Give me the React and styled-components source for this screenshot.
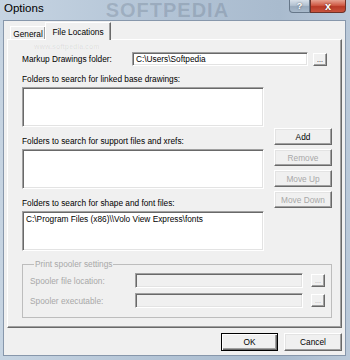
import styled, { createGlobalStyle } from "styled-components";

const GlobalStyle = createGlobalStyle`
  body {
    margin: 0;
    background: #fff;
    font-family: "Liberation Sans", Arial, sans-serif;
  }
`;

const Window = styled.div`
  position: relative;
  width: 350px;
  height: 360px;
  box-sizing: border-box;
  display: flex;
  flex-direction: column;
  padding: 0 4px 4px 3px;
  background: linear-gradient(to right, #c6d4e2, #b3c4d6 45%, #a9bbce 80%, #bac9d9);
  font-size: 8.3px;
  color: #000;
`;

const TitleBar = styled.div`
  height: 20px;
  display: flex;
  align-items: flex-start;
`;

const Caption = styled.div`
  font-size: 11.5px;
  line-height: 16px;
  padding-left: 1px;
  color: #000;
`;

const Watermark = styled.div`
  margin-left: 62px;
  font-size: 20px;
  line-height: 20px;
  font-weight: bold;
  letter-spacing: 1px;
  color: rgba(70, 85, 105, 0.22);
`;

const CaptionButtons = styled.div`
  margin-left: auto;
  display: flex;
`;

const CaptionButton = styled.div`
  height: 13px;
  box-sizing: border-box;
  display: flex;
  align-items: center;
  justify-content: center;
  color: #fff;
  font-weight: bold;
  font-size: ${(p) => (p.$close ? "11px" : "9px")};
  width: ${(p) => (p.$close ? "36px" : "21px")};
  border: 1px solid ${(p) => (p.$close ? "#6e3228" : "#667789")};
  border-top: none;
  border-radius: ${(p) => (p.$close ? "0 0 4px 0" : "0 0 0 4px")};
  background: ${(p) =>
    p.$close
      ? "linear-gradient(#e6a291, #cf5a45 45%, #b83a26 55%, #c9533d)"
      : "linear-gradient(#d8e1ea, #b3c2d1 45%, #98aabd 55%, #a9bacb)"};
  text-shadow: 0 0 2px rgba(0, 0, 0, 0.6);
`;

const Client = styled.div`
  position: relative;
  flex: 1;
  display: flex;
  flex-direction: column;
  background: #f0f0f0;
  border: 1px solid #8797ab;
  padding: 1px 3px 4px 3px;
  overflow: hidden;
`;

const FaintMark = styled.div`
  position: absolute;
  left: ${(p) => p.$x}px;
  top: ${(p) => p.$y}px;
  font-size: ${(p) => p.$size}px;
  font-weight: bold;
  color: rgba(0, 0, 0, 0.07);
  pointer-events: none;
  white-space: nowrap;
`;

const Tabs = styled.div`
  height: 17px;
  display: flex;
  align-items: flex-end;
  padding-left: 3px;
`;

const Tab = styled.div`
  position: relative;
  z-index: ${(p) => (p.$active ? 2 : 1)};
  box-sizing: border-box;
  width: ${(p) => p.$w}px;
  height: ${(p) => (p.$active ? "18px" : "13px")};
  margin-bottom: ${(p) => (p.$active ? "-1px" : "0")};
  margin-left: ${(p) => (p.$active ? "-1px" : "0")};
  display: flex;
  align-items: center;
  justify-content: center;
  background: #f0f0f0;
  border-top: 1px solid #fff;
  border-left: 1px solid #fff;
  border-right: 1px solid #696969;
  box-shadow: inset -1px 0 #a0a0a0;
  padding-top: ${(p) => (p.$active ? "0" : "1px")};
`;

const Panel = styled.div`
  height: 289px;
  box-sizing: border-box;
  display: flex;
  flex-direction: column;
  padding: 12px 9px 0 14px;
  border-top: 1px solid #fff;
  border-left: 1px solid #fff;
  border-right: 1px solid #696969;
  border-bottom: 1px solid #696969;
  box-shadow: inset -1px -1px #a0a0a0;
`;

const FieldRow = styled.div`
  display: flex;
  align-items: center;
  height: ${(p) => p.$h || 14}px;
`;

const FieldLabel = styled.span`
  width: ${(p) => p.$w}px;
  flex-shrink: 0;
  color: ${(p) => (p.$disabled ? "#a8a8a8" : "#000")};
`;

const TextBox = styled.div`
  box-sizing: border-box;
  width: ${(p) => p.$w}px;
  height: ${(p) => p.$h}px;
  background: ${(p) => (p.$disabled ? "#f0f0f0" : "#fff")};
  border-top: 1px solid #a0a0a0;
  border-left: 1px solid #a0a0a0;
  border-right: 1px solid #fff;
  border-bottom: 1px solid #fff;
  box-shadow: inset 1px 1px #696969, inset -1px -1px #e3e3e3;
  padding: 0 3px;
  display: flex;
  align-items: center;
  white-space: nowrap;
`;

const Browse = styled.div`
  box-sizing: border-box;
  width: 14px;
  height: 13px;
  margin-left: ${(p) => p.$gap}px;
  display: flex;
  align-items: flex-end;
  justify-content: center;
  padding-bottom: 2px;
  font-size: 7px;
  line-height: 7px;
  background: #f0f0f0;
  color: ${(p) => (p.$disabled ? "#a8a8a8" : "#000")};
  border-top: 1px solid #fff;
  border-left: 1px solid #fff;
  border-right: 1px solid #696969;
  border-bottom: 1px solid #696969;
  box-shadow: inset -1px -1px #a0a0a0;
`;

const Main = styled.div`
  margin-top: 8px;
  display: grid;
  grid-template-columns: 242px 58px;
  column-gap: 10px;
`;

const Lists = styled.div`
  display: flex;
  flex-direction: column;
  gap: 9px;
`;

const Section = styled.div`
  display: flex;
  flex-direction: column;
  gap: 3px;
`;

const SectionLabel = styled.div`
  line-height: 10px;
  white-space: nowrap;
`;

const ListBox = styled.div`
  box-sizing: border-box;
  height: 40px;
  background: #fff;
  border-top: 1px solid #a0a0a0;
  border-left: 1px solid #a0a0a0;
  border-right: 1px solid #fff;
  border-bottom: 1px solid #fff;
  box-shadow: inset 1px 1px #696969, inset -1px -1px #e3e3e3;
  padding: 2px 3px;
  line-height: 10px;
  white-space: nowrap;
`;

const SideButtons = styled.div`
  padding-top: 54px;
  display: flex;
  flex-direction: column;
  gap: 4px;
`;

const Button = styled.div`
  box-sizing: border-box;
  width: ${(p) => p.$w || 58}px;
  height: ${(p) => p.$h || 17}px;
  display: flex;
  align-items: center;
  justify-content: center;
  background: #f0f0f0;
  color: ${(p) => (p.$disabled ? "#a8a8a8" : "#000")};
  border-top: 1px solid ${(p) => (p.$default ? "#000" : "#fff")};
  border-left: 1px solid ${(p) => (p.$default ? "#000" : "#fff")};
  border-right: 1px solid ${(p) => (p.$default ? "#000" : "#696969")};
  border-bottom: 1px solid ${(p) => (p.$default ? "#000" : "#696969")};
  box-shadow: ${(p) =>
    p.$default
      ? "inset 1px 1px #fff, inset -1px -1px #696969, inset -2px -2px #a0a0a0"
      : "inset -1px -1px #a0a0a0, inset 1px 1px #e3e3e3"};
`;

const Group = styled.fieldset`
  margin: 8px 0 0 0;
  padding: 4px 6px 9px 7px;
  width: 310px;
  box-sizing: border-box;
  min-width: 0;
  border: 1px solid #bdbdbd;
  display: flex;
  flex-direction: column;
  gap: 5px;
`;

const GroupTitle = styled.legend`
  margin-left: 4px;
  padding: 0 1px;
  line-height: 10px;
  color: #a8a8a8;
`;

const Footer = styled.div`
  margin-top: 5px;
  display: flex;
  justify-content: flex-end;
  gap: 6px;
`;

const App = () => {
  return (
    <>
      <GlobalStyle />
      <Window>
        <TitleBar>
          <Caption>Options</Caption>
          <Watermark>SOFTPEDIA</Watermark>
          <CaptionButtons>
            <CaptionButton>?</CaptionButton>
            <CaptionButton $close>x</CaptionButton>
          </CaptionButtons>
        </TitleBar>
        <Client>
          <FaintMark $x={30} $y={22} $size={7}>www.softpedia.com</FaintMark>
          <Tabs>
            <Tab $w={36}>General</Tab>
            <Tab $w={66} $active>File Locations</Tab>
          </Tabs>
          <Panel>
            <FieldRow>
              <FieldLabel $w={110}>Markup Drawings folder:</FieldLabel>
              <TextBox $w={176} $h={14}>{"C:\\Users\\Softpedia"}</TextBox>
              <Browse $gap={5}>...</Browse>
            </FieldRow>
            <Main>
              <Lists>
                <Section>
                  <SectionLabel>Folders to search for linked base drawings:</SectionLabel>
                  <ListBox />
                </Section>
                <Section>
                  <SectionLabel>Folders to search for support files and xrefs:</SectionLabel>
                  <ListBox />
                </Section>
                <Section>
                  <SectionLabel>Folders to search for shape and font files:</SectionLabel>
                  <ListBox>{"C:\\Program Files (x86)\\\\Volo View Express\\fonts"}</ListBox>
                </Section>
              </Lists>
              <SideButtons>
                <Button>Add</Button>
                <Button $disabled>Remove</Button>
                <Button $disabled>Move Up</Button>
                <Button $disabled>Move Down</Button>
              </SideButtons>
            </Main>
            <Group>
              <GroupTitle>Print spooler settings</GroupTitle>
              <FieldRow $h={15}>
                <FieldLabel $w={105} $disabled>Spooler file location:</FieldLabel>
                <TextBox $w={168} $h={15} $disabled />
                <Browse $gap={8} $disabled>...</Browse>
              </FieldRow>
              <FieldRow $h={15}>
                <FieldLabel $w={105} $disabled>Spooler executable:</FieldLabel>
                <TextBox $w={168} $h={15} $disabled />
                <Browse $gap={8} $disabled>...</Browse>
              </FieldRow>
            </Group>
          </Panel>
          <Footer>
            <Button $w={57} $h={18} $default>OK</Button>
            <Button $w={58} $h={18}>Cancel</Button>
          </Footer>
        </Client>
      </Window>
    </>
  );
};

export default App;
